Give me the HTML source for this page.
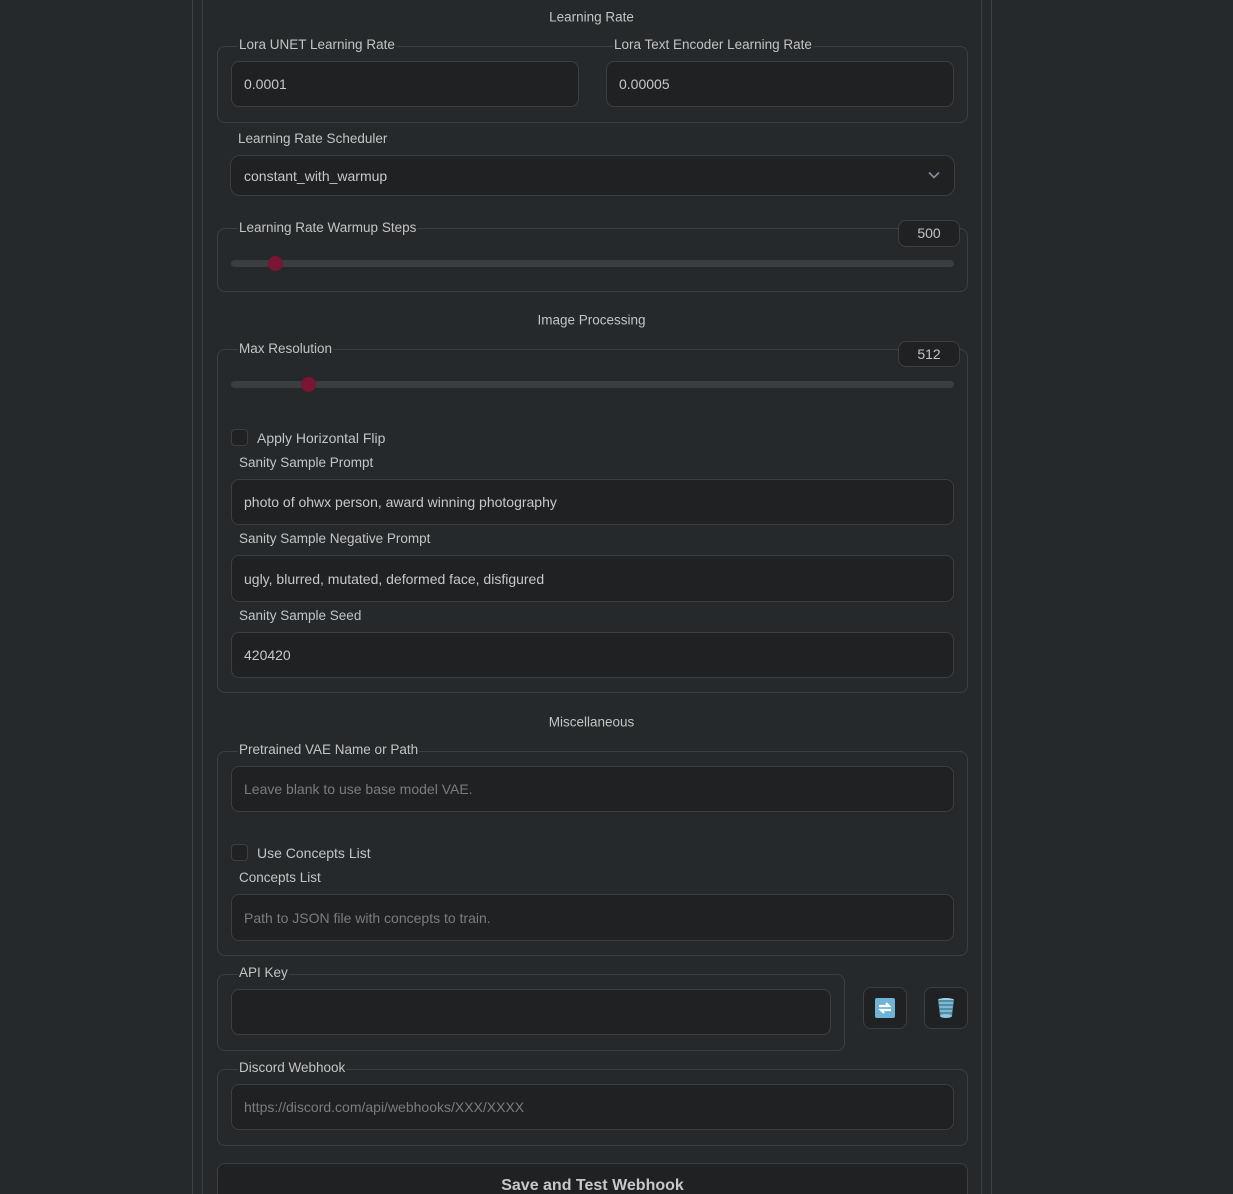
<!DOCTYPE html>
<html style="overflow:hidden;height:1194px"><head><meta charset="utf-8"><style>
body{margin:0;width:1233px;height:1194px;overflow:hidden;background:#25292b;font-family:"Liberation Sans",sans-serif;font-size:13.5px;color:#c4c4c4;position:relative}
.a{position:absolute;box-sizing:border-box}
.vl{position:absolute;top:0;height:1194px;width:1px;background:#3d4144}
.fs{border:1px solid #3b3f42;border-radius:8px}
.in{border:1px solid #3b3f42;border-radius:8px;background:#1f2123;padding-left:12px;display:flex;align-items:center;font-size:14px;color:#c8c8c8}
.ph{color:#7a7d80}
.lb{position:absolute;background:#25292b;padding:0 1px;line-height:16px;transform:translateY(-50%)}
.ct{position:absolute;left:202px;width:779px;text-align:center;transform:translateY(-50%)}
.nb{border:1px solid #3b3f42;border-radius:8px;background:#1f2123;text-align:center;line-height:24px;font-size:14px}
.tr{height:7px;background:#3a3e41;border-radius:4px}
.th{width:15px;height:15px;border-radius:50%;background:#7a1533}
.cb{width:17px;height:17px;border:1px solid #3b3f42;border-radius:4px;background:#1f2123}
.bt{border:1px solid #3b3f42;border-radius:8px;background:#1f2123;display:flex;align-items:center;justify-content:center;font-size:18px}
</style></head><body>
<div class="vl" style="left:192px"></div><div class="vl" style="left:202px"></div>
<div class="vl" style="left:981px"></div><div class="vl" style="left:991px"></div>

<div class="ct" style="top:17px">Learning Rate</div>
<div class="a fs" style="left:217px;top:46px;width:751px;height:77px"></div>
<div class="lb" style="left:238px;top:45px">Lora UNET Learning Rate</div>
<div class="lb" style="left:613px;top:45px">Lora Text Encoder Learning Rate</div>
<div class="a in" style="left:231px;top:61px;width:348px;height:46px">0.0001</div>
<div class="a in" style="left:606px;top:61px;width:348px;height:46px">0.00005</div>

<div class="lb" style="left:237px;top:139px">Learning Rate Scheduler</div>
<div class="a in" style="left:230px;top:155px;width:725px;height:41px;border-radius:10px;padding-left:13px">constant_with_warmup
<svg style="position:absolute;right:14px;top:15px" width="12" height="8" viewBox="0 0 12 8"><path d="M1 1.5L6 6.5L11 1.5" stroke="#8a8d98" stroke-width="1.6" fill="none"/></svg></div>

<div class="a fs" style="left:217px;top:228px;width:751px;height:64px"></div>
<div class="lb" style="left:238px;top:228px">Learning Rate Warmup Steps</div>
<div class="a nb" style="left:898px;top:220px;width:62px;height:27px">500</div>
<div class="a tr" style="left:231px;top:260px;width:723px"></div>
<div class="a th" style="left:268px;top:256px"></div>

<div class="ct" style="top:320px">Image Processing</div>
<div class="a fs" style="left:217px;top:349px;width:751px;height:344px"></div>
<div class="lb" style="left:238px;top:349px">Max Resolution</div>
<div class="a nb" style="left:898px;top:341px;width:62px;height:26px">512</div>
<div class="a tr" style="left:231px;top:381px;width:723px"></div>
<div class="a th" style="left:301px;top:377px"></div>
<div class="a cb" style="left:231px;top:429px"></div>
<div class="lb" style="left:256px;top:438px;font-size:14px">Apply Horizontal Flip</div>
<div class="lb" style="left:238px;top:463px">Sanity Sample Prompt</div>
<div class="a in" style="left:231px;top:479px;width:723px;height:46px">photo of ohwx person, award winning photography</div>
<div class="lb" style="left:238px;top:539px">Sanity Sample Negative Prompt</div>
<div class="a in" style="left:231px;top:555px;width:723px;height:47px">ugly, blurred, mutated, deformed face, disfigured</div>
<div class="lb" style="left:238px;top:616px">Sanity Sample Seed</div>
<div class="a in" style="left:231px;top:632px;width:723px;height:46px">420420</div>

<div class="ct" style="top:722px">Miscellaneous</div>
<div class="a fs" style="left:217px;top:751px;width:751px;height:205px"></div>
<div class="lb" style="left:238px;top:750px">Pretrained VAE Name or Path</div>
<div class="a in ph" style="left:231px;top:766px;width:723px;height:46px">Leave blank to use base model VAE.</div>
<div class="a cb" style="left:231px;top:844px"></div>
<div class="lb" style="left:256px;top:853px;font-size:14px">Use Concepts List</div>
<div class="lb" style="left:238px;top:878px">Concepts List</div>
<div class="a in ph" style="left:231px;top:894px;width:723px;height:47px">Path to JSON file with concepts to train.</div>

<div class="a fs" style="left:217px;top:974px;width:628px;height:77px"></div>
<div class="lb" style="left:238px;top:973px">API Key</div>
<div class="a in" style="left:231px;top:989px;width:600px;height:46px"></div>
<div class="a bt" style="left:863px;top:987px;width:44px;height:42px"><svg width="20" height="20" viewBox="0 0 20 20"><rect x="0" y="0" width="20" height="20" rx="2" fill="#6fb4d6"/><path d="M4 8h10l-3-3M16 12H6l3 3" stroke="#fff" stroke-width="2.2" fill="none"/></svg></div>
<div class="a bt" style="left:924px;top:987px;width:44px;height:42px"><svg width="20" height="22" viewBox="0 0 20 22"><ellipse cx="10" cy="3" rx="8" ry="2" fill="#9fd3e6"/><path d="M2 3L4 19Q10 22 16 19L18 3Z" fill="#4e8ea8"/><path d="M3 6h14M3.5 10h13M4 14h12" stroke="#b8e2f0" stroke-width="1" /><ellipse cx="10" cy="19" rx="6" ry="2" fill="#8cc8de"/></svg></div>

<div class="a fs" style="left:217px;top:1069px;width:751px;height:77px"></div>
<div class="lb" style="left:238px;top:1068px">Discord Webhook</div>
<div class="a in ph" style="left:231px;top:1084px;width:723px;height:46px">https://discord.com/api/webhooks/XXX/XXXX</div>

<div class="a" style="left:217px;top:1163px;width:751px;height:31px;overflow:hidden;border:1px solid #3b3f42;border-bottom:none;border-radius:8px 8px 0 0;background:#1f2123;text-align:center;padding-top:13px;font-size:16px;font-weight:bold;color:#c8c8c8;line-height:18px">Save and Test Webhook</div>
</body></html>
